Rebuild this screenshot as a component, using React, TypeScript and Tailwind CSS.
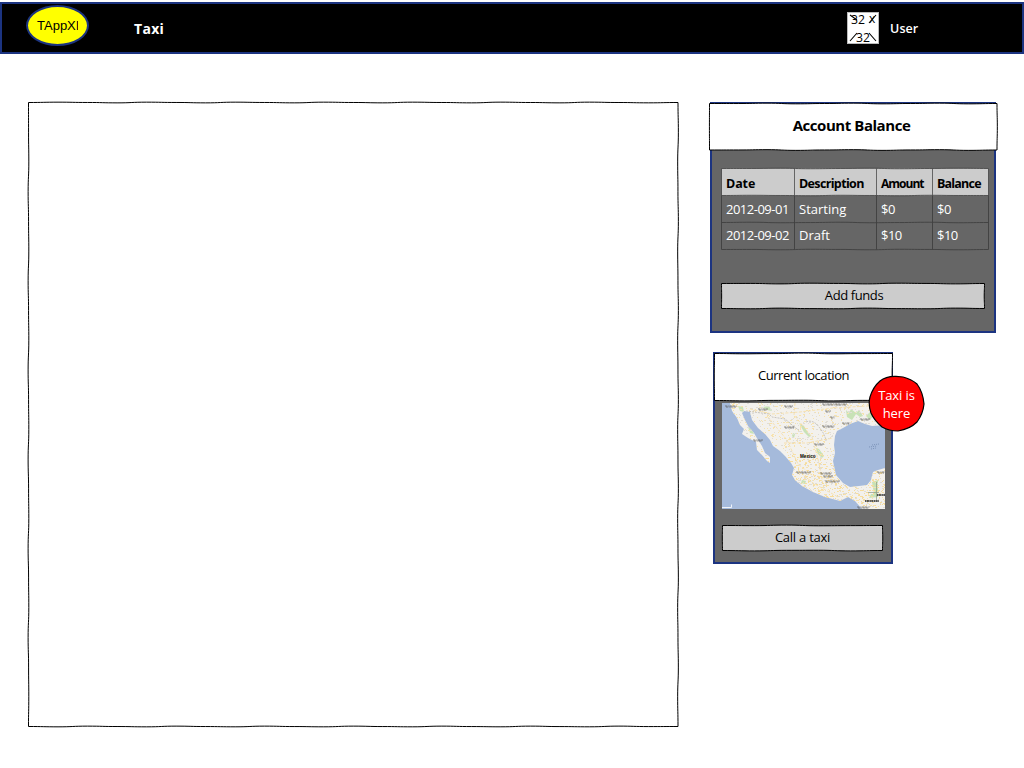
import React from 'react';

/* Hand-drawn line between two points, bulging a little at regular steps. */
function wobble(x1: number, y1: number, x2: number, y2: number, seed: number, amp: number) {
  const len = Math.hypot(x2 - x1, y2 - y1);
  const n = Math.max(2, Math.round(len / 30));
  const nx = -(y2 - y1) / len;
  const ny = (x2 - x1) / len;
  const at = (t: number, off: number) =>
    `${(x1 + (x2 - x1) * t + nx * off).toFixed(2)} ${(y1 + (y2 - y1) * t + ny * off).toFixed(2)}`;
  let d = '';
  let prev = 0;
  for (let i = 1; i <= n; i++) {
    const off = i === n ? 0 : Math.sin(i * 2.1 + seed) * amp;
    d += `C${at((i - 0.5) / n, prev)} ${at((i - 0.5) / n, off)} ${at(i / n, off)}`;
    prev = off;
  }
  return d;
}

function SketchBox({ w, h, fill, seed = 0, amp = 0.4 }: { w: number; h: number; fill: string; seed?: number; amp?: number }) {
  const r = w - 0.5;
  const b = h - 0.5;
  const d =
    'M.5 .5' +
    wobble(0.5, 0.5, r, 0.5, seed, amp) +
    wobble(r, 0.5, r, b, seed + 1, amp) +
    wobble(r, b, 0.5, b, seed + 2, amp) +
    wobble(0.5, b, 0.5, 0.5, seed + 3, amp) +
    'Z';
  return (
    <svg className="absolute inset-0 overflow-visible" width={w} height={h} aria-hidden="true">
      <path d={d} fill={fill} stroke="#000" strokeWidth="1" strokeLinejoin="round" />
    </svg>
  );
}

const LAND =
  'M8 0L10 8L15 15L18 22L22 26L20 31L26 35L34 39L35 47L40 52L45 58L48 60L48 54L43 50L40 43L36 37L32 30L26 23L23 17L20 10L22 8L28 9L30 17L36 25L43 31L48 37L51 43L58 48L63 53L69 60L72 65L70 72L73 77L80 83L91 89L103 94L118 98L126 94L133 98L140 106H163V65L156 67L151 69L149 77L145 82L137 83L128 84L121 80L114 72L111 58L113 50L112 42L113 33L115 28L121 25L128 21L136 18L143 21L150 23L163 22V0Z';

function speckles(count: number, seed: number) {
  let s = seed;
  const next = () => {
    s = (s * 16807) % 2147483647;
    return s / 2147483647;
  };
  let d = '';
  for (let i = 0; i < count; i++) {
    const x = Math.floor(next() * 163);
    const y = Math.floor(next() * 106);
    d += `M${x} ${y + 0.5}h${next() > 0.7 ? 2 : 1}`;
  }
  return d;
}

const YELLOW = speckles(1000, 7123);
const YELLOW_SOUTH = speckles(1500, 91237);
const GREY = speckles(1100, 33517);

const PLACES: [number, number, number][] = [
  [3, 3, 12], [36, 6, 10], [62, 3, 9], [100, 1, 25], [62, 24, 11], [103, 8, 6], [108, 14, 5],
  [100, 23, 13], [120, 20, 8], [138, 16, 10], [92, 41, 10], [31, 37, 10], [74, 69, 15], [98, 70, 12],
  [101, 73, 10], [103, 78, 15], [155, 69, 8], [135, 104, 13],
];

function CountryMap() {
  return (
    <svg className="block" width="163" height="106" viewBox="0 0 163 106" role="img">
      <defs>
        <clipPath id="land"><path d={LAND} /></clipPath>
        <clipPath id="south"><rect y="52" width="163" height="54" /></clipPath>
      </defs>
      <rect width="163" height="106" fill="#a5badb" />
      <path d={LAND} fill="#f3f1ed" />
      <g clipPath="url(#land)">
        <path d="M16 3l5 1 1 5-4-1zM26 24l4 2 2 5-4-1zM41 4l6-1 3 5-5-1zM77 20l5 3 4 7 3 3-2 1-5-5zM94 45l3 1 5 7-2 2-5-5zM124 7l3 3 2-4 5 4 3-3 4 6-3 1-4-3-4 6-5-3zM144 13l4-4 3 4-3 4zM150 79l6-2v17l-9 1 2-4h3zM71 30l2 1-1 4-2-2zM80 77l4 1-1 3-4-1z" fill="#c0dfad" opacity=".85" />
        <path d={GREY} stroke="#e0ddd6" strokeWidth="1" />
        <path d={YELLOW} stroke="#f7e2ac" strokeWidth="1" />
        <g clipPath="url(#south)"><path d={YELLOW_SOUTH} stroke="#f6dc9c" strokeWidth="1" /></g>
        <path d="M28 6L50 11L78 9L111 5L163 2M45 13L65 37L76 61L90 72L117 78M73 0L72 12L90 34L97 60L101 82M62 40L85 40L111 35M76 67L91 80L116 94" fill="none" stroke="#f6dca0" strokeWidth=".8" strokeDasharray="3 1.5" />
        <path d="M24 8L47 11L50 14L63 16L68 20L72 24L77 27M84 19q7-3 13 5q6 7 7 14" fill="none" stroke="#aaa69f" strokeWidth=".6" strokeDasharray="2 1" />
        <path d="M146 89.5h11M154.5 79v18" stroke="#8d9a82" strokeWidth=".7" />
      </g>
      {PLACES.map(([x, y, w], i) => (
        <path key={i} d={`M${x} ${y}h${w}M${x + 1} ${y + 1}h${w - 2}`} stroke="#5d5d5d" strokeWidth=".7" strokeDasharray="2 .7 1 .8 3 .5" />
      ))}
      <path d="M150 42l7-1M147 44l8-1M149 46l5-1" stroke="#6a83ab" strokeWidth=".7" strokeDasharray="1 1" />
      <path d="M143 98h14M155 92h8" stroke="#222" strokeWidth="1.5" strokeDasharray="1.5 .4 2 .5" />
      <text x="78" y="54.5" fontFamily="Liberation Sans, sans-serif" fontWeight="700" fontSize="4.6" fill="#000">Mexico</text>
      <path d="M0 104.5h9.5v-3" fill="none" stroke="#eef2f8" />
    </svg>
  );
}

const COLS = [0, 73, 155, 211, 267];
const ROWS = [
  ['2012-09-01', 'Starting', '$0', '$0'],
  ['2012-09-02', 'Draft', '$10', '$10'],
];

function BalanceTable() {
  return (
    <div className="relative ml-[9px] mt-[17px] h-[82px] w-[268px]">
      <svg className="absolute inset-0 overflow-visible" width="268" height="82" aria-hidden="true">
        <rect x=".5" y=".5" width="267" height="27" fill="#ccc" />
        <g fill="none" stroke="#333" strokeWidth=".9" opacity=".75">
          {[0.5, 27.5, 54.5, 81.5].map((y, i) => (
            <path key={y} d={`M.5 ${y}` + wobble(0.5, y, 267.5, y, i + 1, 0.3)} />
          ))}
          {COLS.map((x) => (
            <path key={x} d={`M${x + 0.5} .5V81.5`} />
          ))}
        </g>
      </svg>
      <table className="relative w-[267px] table-fixed border-collapse text-left text-[13px] leading-[26px] text-white">
        <colgroup>
          <col className="w-[73px]" />
          <col className="w-[82px]" />
          <col className="w-[56px]" />
          <col className="w-[56px]" />
        </colgroup>
        <thead className="text-[12.5px] leading-[24px] text-black">
          <tr className="h-[28px] whitespace-nowrap">
            <th className="p-0 pl-[5px] pt-1 font-bold tracking-[-0.1px]">Date</th>
            <th className="p-0 pl-[5px] pt-1 font-bold tracking-[-0.65px]">Description</th>
            <th className="p-0 pl-[5px] pt-1 text-[12px] font-bold tracking-[-1px]">Amount</th>
            <th className="p-0 pl-[5px] pt-1 font-bold tracking-[-0.8px]">Balance</th>
          </tr>
        </thead>
        <tbody>
          {ROWS.map((row) => (
            <tr key={row[0]} className="h-[26px] whitespace-nowrap">
              {row.map((cell, i) => (
                <td key={i} className={i === 1 ? 'p-0 pl-[5px] tracking-[0px]' : 'p-0 pl-[5px] tracking-[-0.5px]'}>{cell}</td>
              ))}
            </tr>
          ))}
        </tbody>
      </table>
    </div>
  );
}

export default function App() {
  return (
    <div className="h-[768px] w-[1024px] overflow-hidden bg-white pt-0.5 font-['Open_Sans',sans-serif] text-black">
      <header className="flex h-[52px] items-start border-2 border-[#1c3481] bg-black">
        <div className="ml-6 mt-px flex h-[41px] w-[63px] shrink-0 items-center rounded-[50%] border-2 border-[#1c3481] bg-[#ff0] pl-[9px]">
          <span className="w-[41px] overflow-hidden whitespace-nowrap font-['Liberation_Sans',sans-serif] text-[13px] leading-5">TAppXI</span>
        </div>
        <nav className="ml-[45px] mt-[14px] text-[14px] font-bold leading-[22px] tracking-[0.3px] text-white">Taxi</nav>
        <div className="ml-auto mr-[104px] flex">
          <svg className="mt-2 overflow-visible" width="32" height="32" viewBox="0 0 32 32">
            <rect x=".5" y=".5" width="31" height="31" fill="#fff" stroke="#bbb" />
            <path d="M3 3l7 5M29 3l-7 8M3 29l7-8M22 21l7 8" stroke="#000" strokeWidth="1.1" />
            <g fontFamily="Open Sans, sans-serif" fontSize="12" fill="#000">
              <text x="4" y="12" textLength="14" lengthAdjust="spacingAndGlyphs">32</text>
              <text x="22" y="11" textLength="6">x</text>
              <text x="9" y="29.5" textLength="14" lengthAdjust="spacingAndGlyphs">32</text>
            </g>
          </svg>
          <span className="ml-[11px] mt-[14px] w-[28px] whitespace-nowrap text-[12.5px] font-semibold leading-[22px] tracking-[0.1px] text-white">User</span>
        </div>
      </header>

      <div className="flex items-start">
        <main className="relative ml-7 mt-12 h-[625px] w-[650px] shrink-0">
          <SketchBox w={650.5} h={625} fill="#fff" seed={2} amp={0.4} />
        </main>

        <aside className="ml-8 mt-12">
          <section className="h-[231px] w-[286px] border-2 border-[#1c3481] bg-[#666]">
            <div className="relative -ml-[3px] -mt-px flex h-12 w-[289px] items-center justify-center">
              <SketchBox w={288.5} h={47.5} fill="#fff" seed={1} />
              <h2 className="relative -left-0.5 -top-0.5 whitespace-nowrap text-[15px] font-bold tracking-[-0.45px]">Account Balance</h2>
            </div>
            <BalanceTable />
            <button className="relative ml-[9px] mt-[33px] flex h-[26px] w-[264px] items-center justify-center text-[13px] tracking-[-0.4px]">
              <SketchBox w={264} h={26} fill="#ccc" seed={4} />
              <span className="relative left-px whitespace-nowrap">Add funds</span>
            </button>
          </section>

          <section className="relative ml-[3px] mt-[18.5px] h-[212px] w-[180px] border-2 border-[#1c3481] bg-[#666]">
            <div className="relative -ml-px -mt-px flex h-12 w-[179px] items-center justify-center">
              <SketchBox w={179} h={48} fill="#fff" seed={5} />
              <h2 className="relative -top-px whitespace-nowrap text-[13px] tracking-[-0.45px]">Current location</h2>
            </div>
            <div className="ml-[7px] mt-[2px]">
              <CountryMap />
            </div>
            <button className="relative ml-[7px] mt-4 flex h-[26px] w-[161px] items-center justify-center text-[13px] tracking-[-0.25px]">
              <SketchBox w={161} h={26} fill="#ccc" seed={7} />
              <span className="relative whitespace-nowrap">Call a taxi</span>
            </button>
            <div className="absolute left-[153px] top-[21.5px] flex h-[57px] w-[57px] items-center justify-center">
              <svg className="absolute inset-0" width="57" height="57" aria-hidden="true">
                <path d="M28 1.3L35 2Q43 4 49 9Q55 17 56 29Q55 39 49 47Q42 54 30 56Q21 56 14 52Q6 45 3 38Q0 29 2 22Q5 12 12 6Q18 1 28 1.3Z" fill="#f00" stroke="#000" strokeWidth="1.2" />
              </svg>
              <span className="relative text-center text-[13px] leading-[18px] tracking-[-0.1px] text-white">Taxi is<br />here</span>
            </div>
          </section>
        </aside>
      </div>
    </div>
  );
}
